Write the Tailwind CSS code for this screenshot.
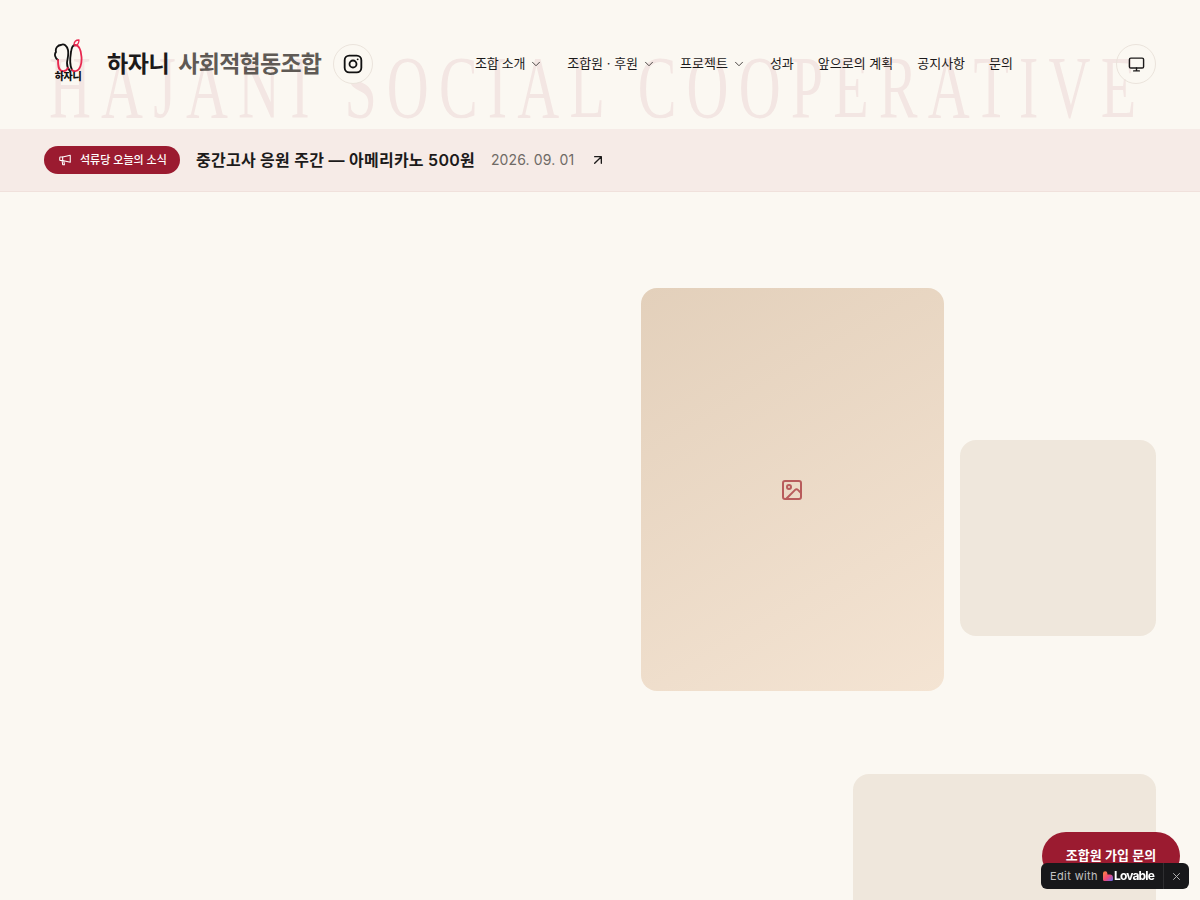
<!DOCTYPE html>
<html lang="ko">
<head>
<meta charset="utf-8" />
<title>하자니 사회적협동조합</title>
<script src="https://cdn.jsdelivr.net/npm/@tailwindcss/browser@4"></script>
</head>
<body class="bg-[#fbf8f2] text-[#1c1a1a] font-['Inter','Noto_Sans_CJK_KR',sans-serif] h-[900px] overflow-hidden">

<header class="relative h-[129px] px-11 overflow-hidden">
  <div class="absolute left-[49px] top-[44px] w-max whitespace-nowrap pointer-events-none font-['Liberation_Serif',serif] text-[88px] leading-[88px] text-[#9b1b30]/[0.08] tracking-[0.175em] origin-left scale-x-[0.66]">HAJANI SOCIAL COOPERATIVE</div>

  <div class="relative flex items-center h-full pb-[1px]">
    <a class="flex items-center gap-[15px]">
      <div class="w-12 flex flex-col items-center mb-2">
        <svg width="30" height="33" viewBox="53 39 30 33" fill="none" stroke-width="1.8" stroke-linecap="round" stroke-linejoin="round">
          <path d="M58 60C55 58 54 54 56 52C55 48 58 45 61 45C64 43 67 46 68 50C69 56 67 60 67 63C67 67 68 69 70 71" stroke="#111"/>
          <path d="M58 60C58 65 58 70 62 71C65 71.5 67 70 68 68" stroke="#e8284f"/>
          <path d="M72 70C70 66 70 58 71 52C71.5 48 73 45 75 45" stroke="#111"/>
          <path d="M75 45C79 45 81 50 81.5 57C82 64 80 70 76 71C74 71.5 73 71 72 70" stroke="#e8284f"/>
          <path d="M74 45C74 42 76 40 79 40C79 43 78 45 75 46" stroke="#e8284f" stroke-width="1.3"/>
        </svg>
        <span class="text-[10px] leading-[9px] font-black tracking-[-0.03em] text-[#111]">하자니</span>
      </div>
      <div class="flex items-baseline gap-[9px] tracking-[-0.025em] font-semibold">
        <span class="text-[23px]">하자니</span>
        <span class="text-[23px] tracking-[-0.032em] text-[#5f5a55]">사회적협동조합</span>
      </div>
    </a>
    <a class="ml-[12px] w-10 h-10 rounded-full border border-[#ebe4dc] bg-[#fbf8f2] flex items-center justify-center">
      <svg width="20" height="20" viewBox="0 0 24 24" fill="none" stroke="#111" stroke-width="2.2" stroke-linecap="round" stroke-linejoin="round">
        <rect x="2" y="2" width="20" height="20" rx="5.5"/>
        <circle cx="12" cy="12" r="4.2"/>
        <path d="M17.6 6.4h.01"/>
      </svg>
    </a>

    <nav class="ml-auto flex items-center gap-6 text-[13px]">
      <a class="flex items-center gap-[4px] tracking-[-0.02em]">조합 소개
        <svg width="14" height="14" viewBox="0 0 24 24" fill="none" stroke="#4a4644" stroke-width="1.7" stroke-linecap="round" stroke-linejoin="round"><path d="m6 9 6 6 6-6"/></svg>
      </a>
      <a class="flex items-center gap-[4px]">조합원 · 후원
        <svg width="14" height="14" viewBox="0 0 24 24" fill="none" stroke="#4a4644" stroke-width="1.7" stroke-linecap="round" stroke-linejoin="round"><path d="m6 9 6 6 6-6"/></svg>
      </a>
      <a class="flex items-center gap-[4px]">프로젝트
        <svg width="14" height="14" viewBox="0 0 24 24" fill="none" stroke="#4a4644" stroke-width="1.7" stroke-linecap="round" stroke-linejoin="round"><path d="m6 9 6 6 6-6"/></svg>
      </a>
      <a>성과</a>
      <a>앞으로의 계획</a>
      <a>공지사항</a>
      <a>문의</a>
    </nav>

    <button class="ml-[103px] w-10 h-10 rounded-full border border-[#ebe4dc] flex items-center justify-center">
      <svg width="17" height="17" viewBox="0 0 24 24" fill="none" stroke="#1c1a1a" stroke-width="2" stroke-linecap="round" stroke-linejoin="round">
        <rect x="2" y="3" width="20" height="14" rx="2"/>
        <path d="M8 21h8M12 17v4"/>
      </svg>
    </button>
  </div>
</header>

<section class="h-[63px] bg-[#f6ebe7] border-b border-[#f0e1dc] px-11 flex items-center">
  <span class="h-7 w-[136px] pl-[14px] rounded-full bg-[#9b1b30] text-white text-[11px] font-medium flex items-center gap-2">
    <svg width="14" height="14" viewBox="0 0 24 24" fill="none" stroke="white" stroke-width="1.8" stroke-linecap="round" stroke-linejoin="round">
      <path d="M21 4v12L8 13H4a1 1 0 0 1-1-1V8a1 1 0 0 1 1-1h4z"/>
      <path d="M8 7v6M7 13l1 7h3l-1-6"/>
    </svg>
    석류당 오늘의 소식
  </span>
  <span class="ml-4 mb-[1px] text-[16px] font-semibold tracking-[0.015em]">중간고사 응원 주간 — 아메리카노 500원</span>
  <span class="ml-4 text-sm text-[#6f6a66] tracking-[0.01em]">2026. 09. 01</span>
  <svg class="ml-4" width="16" height="16" viewBox="0 0 24 24" fill="none" stroke="#1c1a1a" stroke-width="2" stroke-linecap="round" stroke-linejoin="round"><path d="M7 17 17 7M7 7h10v10"/></svg>
</section>

<main class="h-[708px] overflow-hidden px-11 pt-24">
  <div class="flex justify-end items-start gap-4">
    <div class="w-[303px] h-[403px] rounded-[16px] bg-linear-150 from-[#e3d0bb] to-[#f4e4d3] flex items-center justify-center">
      <svg class="mr-[2px]" width="24" height="24" viewBox="0 0 24 24" fill="none" stroke="#b85c5c" stroke-width="2" stroke-linecap="round" stroke-linejoin="round">
        <rect x="3" y="3" width="18" height="18" rx="2"/>
        <circle cx="9" cy="9" r="2"/>
        <path d="m21 15-3.1-3.1a2 2 0 0 0-2.8 0L6 21"/>
      </svg>
    </div>
    <div class="w-[196px] h-[196px] mt-[152px] rounded-[16px] bg-[#efe7dc]"></div>
  </div>
  <div class="flex justify-end mt-[83px]">
    <div class="w-[303px] h-[403px] rounded-[16px] bg-[#efe7dc]"></div>
  </div>
</main>

<a class="fixed left-[1042px] top-[832px] w-[138px] h-12 rounded-full bg-[#9b1b30] text-white text-[13px] font-semibold flex items-center justify-center">조합원 가입 문의</a>

<div class="fixed left-[1041px] top-[863px] w-[148px] h-[26px] rounded-[6px] bg-[#18181a] text-white flex items-center pl-[9px]">
  <span class="text-[11px] tracking-[0.035em] text-[#c2c2c2]">Edit with</span>
  <svg class="ml-[5px]" width="10" height="10" viewBox="0 0 10 10">
    <defs><linearGradient id="lovable" x1="0" y1="0" x2="1" y2="1"><stop offset="0" stop-color="#ff8a3d"/><stop offset="0.55" stop-color="#f0477a"/><stop offset="1" stop-color="#5b6cf0"/></linearGradient></defs>
    <path d="M0 2.4a2.2 2.2 0 0 1 4.4 0V3.4H6.4A3.4 3.4 0 0 1 10 6.8V8.5A1.5 1.5 0 0 1 8.5 10H1.5A1.5 1.5 0 0 1 0 8.5z" fill="url(#lovable)"/>
  </svg>
  <span class="ml-[1px] text-[12px] font-bold tracking-[-0.07em] text-white">Lovable</span>
  <span class="ml-auto w-[26px] h-full border-l border-[#2e2e30] flex items-center justify-center">
    <svg width="9" height="9" viewBox="0 0 12 12" fill="none" stroke="#b5b5b5" stroke-width="1.3" stroke-linecap="round"><path d="M2 2l8 8M10 2l-8 8"/></svg>
  </span>
</div>

</body>
</html>
